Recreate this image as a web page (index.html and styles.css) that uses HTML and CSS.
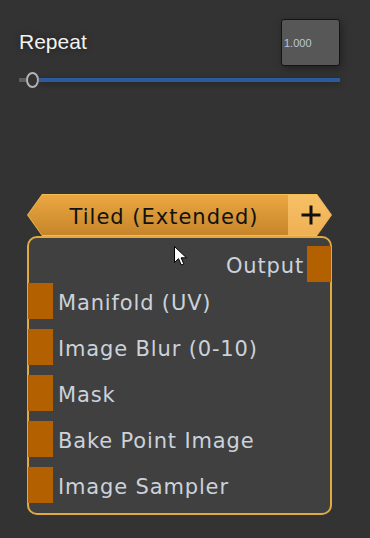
FILE: index.html
```html
<!DOCTYPE html>
<html>
<head>
<meta charset="utf-8">
<link rel="stylesheet" href="styles.css">
</head>
<body>
<div class="top">
  <div class="row">
    <div class="label">Repeat</div>
    <div class="valbox">1.000</div>
  </div>
  <div class="slider">
    <div class="track-off"></div>
    <div class="knob"></div>
    <div class="track-on"></div>
  </div>
</div>
<div class="node">
  <div class="header-outer">
    <div class="header">
      <div class="title">Tiled (Extended)</div>
      <div class="plus">
        <svg width="22" height="22" viewBox="0 0 22 22"><path d="M11 1.5V20.5M1.5 11H20.5" stroke="#111" stroke-width="3" fill="none"/></svg>
      </div>
    </div>
  </div>
  <div class="body">
    <div class="out-row"><span class="port-label">Output</span><span class="port port-out"></span></div>
    <div class="inputs">
      <div class="in-row"><span class="port port-in"></span><span class="port-label">Manifold (UV)</span></div>
      <div class="in-row"><span class="port port-in"></span><span class="port-label">Image Blur (0-10)</span></div>
      <div class="in-row"><span class="port port-in"></span><span class="port-label">Mask</span></div>
      <div class="in-row"><span class="port port-in"></span><span class="port-label">Bake Point Image</span></div>
      <div class="in-row"><span class="port port-in"></span><span class="port-label">Image Sampler</span></div>
    </div>
  </div>
  <svg class="cursor" width="14" height="20" viewBox="0 0 14 20"><path d="M0.5 0.5V16.5L4.5 12.7L7.3 19L9.8 17.9L7.1 11.8H12.5Z" fill="#fff" stroke="#000" stroke-width="1"/></svg>
</div>
</body>
</html>
```
FILE: styles.css
```css
html, body {
  margin: 0;
  padding: 0;
  background: #333333;
  width: 370px;
  height: 538px;
  overflow: hidden;
}
.top {
  padding: 19px 30px 0 19px;
}
.row {
  display: flex;
  justify-content: space-between;
  align-items: flex-start;
}
.label {
  margin-top: 11px;
  font-family: "Liberation Sans", Arial, sans-serif;
  font-size: 21px;
  line-height: 24px;
  color: #f2f2f2;
  text-shadow: 0 0 6px rgba(0,0,0,0.45);
}
.valbox {
  width: 59px;
  height: 47px;
  box-sizing: border-box;
  border: 1px solid #141414;
  border-radius: 3px;
  background: #575757;
  box-shadow: 2px 3px 8px rgba(0,0,0,0.35);
  display: flex;
  align-items: center;
  padding-left: 2px;
  font-family: "Liberation Sans", Arial, sans-serif;
  font-size: 11px;
  color: #b9c8d6;
}
.slider {
  margin-top: 6px;
  height: 16px;
  display: flex;
  align-items: center;
}
.track-off {
  width: 7px;
  height: 4px;
  background: #5e5e5e;
}
.knob {
  width: 13px;
  height: 16px;
  box-sizing: border-box;
  border: 2px solid #b4b4b4;
  border-radius: 50%;
  background: #333;
  flex: none;
}
.track-on {
  flex: 1;
  height: 4px;
  background: #2b5b9e;
  box-shadow: 0 2px 6px rgba(0,0,0,0.35);
}
.node {
  position: relative;
  margin: 106px 0 0 27px;
  width: 305px;
}
.header-outer {
  height: 42px;
  padding: 1px;
  box-sizing: border-box;
  background: #f0bd55;
  clip-path: polygon(15px 0, calc(100% - 15px) 0, 100% 50%, calc(100% - 15px) 100%, 15px 100%, 0 50%);
}
.header {
  height: 100%;
  display: flex;
  background: linear-gradient(#eaa740, #c7852b);
  clip-path: polygon(14px 0, calc(100% - 14px) 0, 100% 50%, calc(100% - 14px) 100%, 14px 100%, 0 50%);
}
.title {
  flex: 1;
  display: flex;
  align-items: center;
  justify-content: center;
  padding-left: 12px;
  padding-top: 4px;
  box-sizing: border-box;
  font-family: "DejaVu Sans", Verdana, sans-serif;
  font-size: 21px;
  letter-spacing: 1px;
  color: #111;
}
.plus {
  width: 43px;
  padding-right: 14px;
  box-sizing: border-box;
  display: flex;
  align-items: center;
  justify-content: flex-end;
  background: linear-gradient(#f7c066, #efb055);
}
.plus svg {
  margin-right: -5px;
}
.body {
  height: 279px;
  box-sizing: border-box;
  border: 2px solid #e2a93e;
  border-radius: 10px;
  background: #404040;
  padding-top: 8px;
}
.out-row {
  height: 36px;
  display: flex;
  justify-content: flex-end;
  align-items: flex-start;
}
.inputs {
  margin-top: 1px;
  display: flex;
  flex-direction: column;
  gap: 10px;
}
.in-row {
  height: 36px;
  display: flex;
  align-items: flex-start;
}
.port {
  display: block;
  width: 25px;
  height: 36px;
  background: #b36100;
  flex: none;
}
.port-in {
  margin-left: -1px;
  margin-right: 5px;
}
.port-out {
  width: 24px;
  margin-right: -1px;
  margin-left: 3px;
}
.port-label {
  font-family: "DejaVu Sans", Verdana, sans-serif;
  font-size: 21px;
  letter-spacing: 0.85px;
  line-height: 40px;
  height: 36px;
  color: #cbd2da;
}
.cursor {
  position: absolute;
  left: 147px;
  top: 52px;
}
```
